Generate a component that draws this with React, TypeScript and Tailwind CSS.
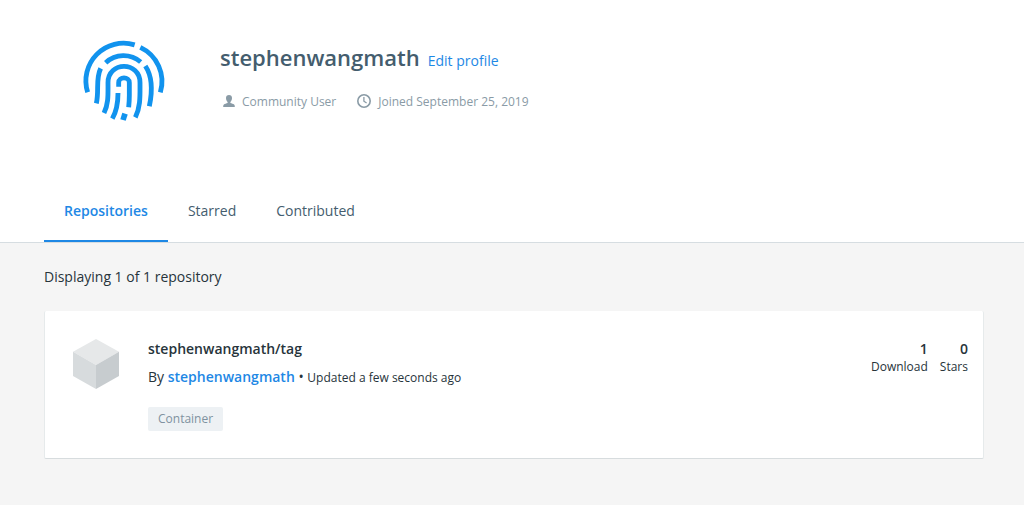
import React from "react";

function Fingerprint() {
  return (
    <svg viewBox="0 0 300 300" className="size-[100px] shrink-0" fill="none" stroke="#1193ee" strokeWidth="14.5">
      <path d="M41 181A113 113 0 0 1 182 38.6" />
      <path d="M199 46A113 113 0 0 1 259 181" />
      <path d="M95 92A79 79 0 0 1 200 90" />
      <path d="M214 102C235 133 235 180 226 223" />
      <path d="M80 109C64 142 76 176 67 214" />
      <path d="M90 243C104 215 102 187 102 152C102 87 198 87 198 152C198 190 200 225 184 256" />
      <path d="M134 164V152C134 133 166 133 166 152V190Q166 208 164 226" />
      <path d="M132 183C132 216 128 237 115 260" />
      <path d="M153 245L147 264" strokeWidth="17" />
    </svg>
  );
}

function UserIcon() {
  return (
    <svg viewBox="0 0 12 12" className="h-3 w-3" fill="#8a9ba6">
      <path d="M6 0C4.1 0 3 1.2 3 3.1C3 4.8 3.7 6.2 4.6 6.9V8C3.4 8.5 1.7 8.9.9 9.5C.3 10 .2 11 .2 12H11.8C11.8 11 11.7 10 11.1 9.5C10.3 8.9 8.6 8.5 7.4 8V6.9C8.3 6.2 9 4.8 9 3.1C9 1.2 7.9 0 6 0Z" />
    </svg>
  );
}

function ClockIcon() {
  return (
    <svg viewBox="0 0 14 14" className="h-3.5 w-3.5" fill="none" stroke="#8a9ba6">
      <circle cx="7" cy="7" r="6.2" strokeWidth="1.6" />
      <path d="M6.9 3V7.2L9.6 9" strokeWidth="1.3" />
    </svg>
  );
}

function Cube() {
  return (
    <svg viewBox="0 0 46 50" className="mt-7 ml-7 h-[50px] w-[46px] shrink-0">
      <path d="M23 0L46 12.8L23 26L0 12.8Z" fill="#e6e8e9" />
      <path d="M0 12.8L23 26V50L0 37Z" fill="#d7dbdd" />
      <path d="M46 12.8L23 26V50L46 37Z" fill="#c7cccf" />
    </svg>
  );
}

function Stat({ value, label }: { value: number; label: string }) {
  return (
    <div className="text-right">
      <div className="text-sm leading-5 font-semibold">{value}</div>
      <div className="text-xs leading-4">{label}</div>
    </div>
  );
}

export default function App() {
  return (
    <div className="flex h-[505px] flex-col overflow-hidden bg-[#f5f5f5] font-['Open_Sans',sans-serif] text-sm text-[#27343b]">
      <header className="flex h-[243px] shrink-0 flex-col justify-between border-b border-[#d6dde1] bg-white">
        <div className="flex pt-8 pl-[74px]">
          <Fingerprint />
          <div className="ml-[46px] pt-[9px]">
            <div className="flex items-baseline gap-2">
              <h1 className="text-[22px] leading-8 font-semibold text-[#445d6e]">stephenwangmath</h1>
              <a className="text-sm text-[#1e88e5]">Edit profile</a>
            </div>
            <div className="mt-[19px] flex h-[18px] items-center text-xs text-[#8a9ba6]">
              <span className="ml-[3px] flex items-center gap-[7px]">
                <UserIcon />
                <span className="pt-0.5">Community User</span>
              </span>
              <span className="ml-[21px] flex items-center gap-[7px]">
                <ClockIcon />
                <span className="pt-0.5">Joined September 25, 2019</span>
              </span>
            </div>
          </div>
        </div>
        <nav className="ml-11 flex h-[61px] text-[#445d6e]">
          <a className="border-b-2 border-[#1e88e5] px-5 pt-5 leading-5 font-semibold text-[#1e88e5]">Repositories</a>
          <a className="px-5 pt-5 leading-5">Starred</a>
          <a className="px-5 pt-5 leading-5">Contributed</a>
        </nav>
      </header>
      <main className="pr-10 pl-11 pt-6">
        <p className="leading-5">Displaying 1 of 1 repository</p>
        <article className="mt-6 flex h-[148px] rounded-[2px] border-x border-b border-x-[#e6eaeb] border-b-[#d7dcde] bg-white">
          <Cube />
          <div className="ml-[29px] flex-1 pt-7">
            <h2 className="leading-5 font-semibold">stephenwangmath/tag</h2>
            <p className="mt-2 leading-5">
              By <a className="font-semibold text-[#1e88e5]">stephenwangmath</a> • <span className="text-xs">Updated a few seconds ago</span>
            </p>
            <span className="mt-5 inline-block h-6 rounded-[2px] bg-[#edf1f4] px-2.5 text-xs leading-6 text-[#7f92a0]">Container</span>
          </div>
          <div className="mr-[15px] flex gap-3 pt-7">
            <Stat value={1} label="Download" />
            <Stat value={0} label="Stars" />
          </div>
        </article>
      </main>
    </div>
  );
}
